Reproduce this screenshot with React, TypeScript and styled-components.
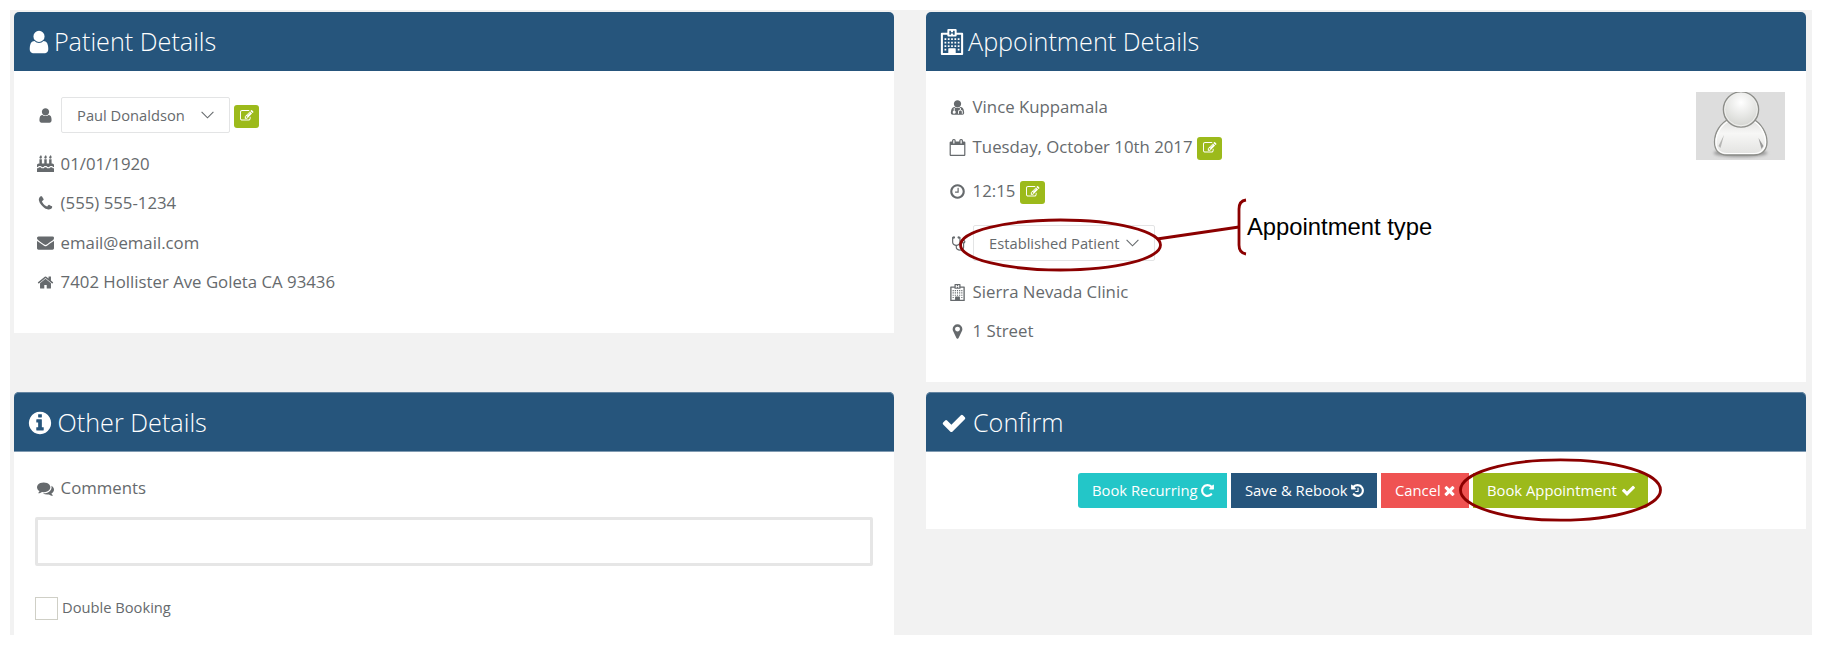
import React from 'react';
import styled, { createGlobalStyle } from 'styled-components';

const GlobalStyle = createGlobalStyle`
  * { box-sizing: border-box; }
  body {
    margin: 0;
    background: #fff;
    color: #666a6d;
    font: 16.8px/24px "Open Sans", sans-serif;
  }
`;

const ring =
  'M1664 896q0 209-103 385.5t-279.5 279.5-385.5 103-385.5-103-279.5-279.5-103-385.5 103-385.5 279.5-279.5 385.5-103 385.5 103 279.5 279.5 103 385.5z';
const flame =
  'q0 77-36 118.5t-92 41.5q-53 0-90.5-37.5t-37.5-90.5q0-29 9.5-51t23.5-34 31-28 31-31.5 23.5-44.5 9.5-67q38 0 83 74t45 150z';
const windowRow = (y: number, xs: number[]) => xs.map((x) => `M${x} ${y}h120v120h-120z`).join('');

const paths = {
  user: 'M1536 1399q0 109-62.5 187t-150.5 78h-854q-88 0-150.5-78t-62.5-187q0-85 8.5-160.5t31.5-152 58.5-131 94-89 134.5-34.5q131 128 313 128t313-128q76 0 134.5 34.5t94 89 58.5 131 31.5 152 8.5 160.5zm-256-887q0 159-112.5 271.5t-271.5 112.5-271.5-112.5-112.5-271.5 112.5-271.5 271.5-112.5 271.5 112.5 112.5 271.5z',
  cake:
    'M1792 1408v384h-1792v-384q45 0 85-14t59-27.5 47-37.5q30-27 51.5-38t56.5-11q24 0 44 7t31 15 33 27q29 25 47 38t58 27 86 14q45 0 85-14.5t58-27 48-37.5q21-19 32.5-27t31-15 43.5-7q35 0 56.5 11t51.5 38q28 24 47 37.5t59 27.5 85 14 85-14 59-27.5 47-37.5q30-27 51.5-38t56.5-11q34 0 55.5 11t51.5 38q28 24 47 37.5t59 27.5 85 14z' +
    'M1792 1088v192q-24 0-44-7t-31-15-33-27q-29-25-47-38t-58-27-85-14q-46 0-86 14t-58 27-47 38q-22 19-33 27t-31 15-44 7q-35 0-56.5-11t-51.5-38q-29-25-47-38t-58-27-86-14q-45 0-85 14.5t-58 27-48 37.5q-21 19-32.5 27t-31 15-43.5 7q-35 0-56.5-11t-51.5-38q-28-24-47-37.5t-59-27.5-85-14q-46 0-86 14t-58 27-47 38q-22 19-33 27t-31 15-44 7v-192q0-80 56-136t136-56h64v-448h256v448h256v-448h256v448h256v-448h256v448h64q80 0 136 56t56 136z' +
    `M512 224${flame}M1024 224${flame}M1536 224${flame}`,
  phone:
    'M1600 1240q0 27-10 70.5t-21 68.5q-21 50-122 106-94 51-186 51-27 0-52.5-3.5t-57.5-12.5-47.5-14.5-55.5-20.5-49-18q-98-35-175-83-128-79-264.5-215.5t-215.5-264.5q-48-77-83-175-3-9-18-49t-20.5-55.5-14.5-47.5-12.5-57.5-3.5-52.5q0-92 51-186 56-101 106-122 25-11 68.5-21t70.5-10q14 0 21 3 18 6 53 76 11 19 30 54t35 63.5 31 53.5q3 4 17.5 25t21.5 35.5 7 28.5q0 20-28.5 50t-62 55-62 53-28.5 46q0 9 5 22.5t8.5 20.5 14 24 11.5 19q76 137 174 235t235 174q2 1 19 11.5t24 14 20.5 8.5 22.5 5q18 0 46-28.5t53-62 55-62 50-28.5q14 0 28.5 7t35.5 21.5 25 17.5q25 15 53.5 31t63.5 35 54 30q70 35 76 53 3 7 3 21z',
  envelope:
    'M1792 710v794q0 66-47 113t-113 47h-1472q-66 0-113-47t-47-113v-794q44 49 101 87 362 246 497 345 57 42 92.5 65.5t94.5 48 110 24.5h2q51 0 110-24.5t94.5-48 92.5-65.5q170-123 498-345 57-39 100-87zm0-294q0 79-49 151t-122 123q-376 261-468 325-10 7-42.5 31t-54 38.5-52 32.5-57.5 27-50 9h-2q-23 0-50-9t-57.5-27-52-32.5-54-38.5-42.5-31q-91-64-262-182.5t-205-142.5q-62-42-117-115.5t-55-136.5q0-78 41.5-130t118.5-52h1472q65 0 112.5 47t47.5 113z',
  home: 'M1472 992v480q0 26-19 45t-45 19h-384v-384h-256v384h-384q-26 0-45-19t-19-45v-480q0-1 .5-3t.5-3l575-474 575 474q1 2 1 6zm223-69l-62 74q-8 9-21 11h-3q-13 0-21-7l-692-577-692 577q-12 8-24 7-13-2-21-11l-62-74q-8-10-7-23.5t11-21.5l719-599q32-26 76-26t76 26l244 204v-195q0-14 9-23t23-9h192q14 0 23 9t9 23v408l219 182q10 8 11 21.5t-7 23.5z',
  calendar:
    'M192 1664h1408v-1024h-1408v1024zm384-1216v-288q0-14-9-23t-23-9h-64q-14 0-23 9t-9 23v288q0 14 9 23t23 9h64q14 0 23-9t9-23zm768 0v-288q0-14-9-23t-23-9h-64q-14 0-23 9t-9 23v288q0 14 9 23t23 9h64q14 0 23-9t9-23zm384-64v1280q0 52-38 90t-90 38h-1408q-52 0-90-38t-38-90v-1280q0-52 38-90t90-38h128v-96q0-66 47-113t113-47h64q66 0 113 47t47 113v96h384v-96q0-66 47-113t113-47h64q66 0 113 47t47 113v96h128q52 0 90 38t38 90z',
  clock:
    'M1024 544v448q0 14-9 23t-23 9h-320q-14 0-23-9t-9-23v-64q0-14 9-23t23-9h224v-352q0-14 9-23t23-9h64q14 0 23 9t9 23zM1440 896q0-148-73-273t-198-198-273-73-273 73-198 198-73 273 73 273 198 198 273 73 273-73 198-198 73-273z' +
    ring,
  marker:
    'M1152 640q0-106-75-181t-181-75-181 75-75 181 75 181 181 75 181-75 75-181zm256 0q0 109-33 179l-364 774q-16 33-47.5 52t-67.5 19-67.5-19-46.5-52l-365-774q-33-70-33-179 0-212 150-362t362-150 362 150 150 362z',
  info:
    'M1152 1376v-160q0-14-9-23t-23-9h-96v-512q0-14-9-23t-23-9h-320q-14 0-23 9t-9 23v160q0 14 9 23t23 9h96v320h-96q-14 0-23 9t-9 23v160q0 14 9 23t23 9h448q14 0 23-9t9-23zm-128-896v-160q0-14-9-23t-23-9h-192q-14 0-23 9t-9 23v160q0 14 9 23t23 9h192q14 0 23-9t9-23z' +
    ring,
  check:
    'M1671 566q0 40-28 68l-724 724-136 136q-28 28-68 28t-68-28l-136-136-362-362q-28-28-28-68t28-68l136-136q28-28 68-28t68 28l294 295 656-657q28-28 68-28t68 28l136 136q28 28 28 68z',
  times:
    'M1490 1322q0 40-28 68l-136 136q-28 28-68 28t-68-28l-294-294-294 294q-28 28-68 28t-68-28l-136-136q-28-28-28-68t28-68l294-294-294-294q-28-28-28-68t28-68l136-136q28-28 68-28t68 28l294 294 294-294q28-28 68-28t68 28l136 136q28 28 28 68t-28 68l-294 294 294 294q28 28 28 68z',
  repeat:
    'M1664 256v448q0 26-19 45t-45 19h-448q-42 0-59-40-17-39 14-69l138-138q-148-137-349-137-104 0-198.5 40.5t-163.5 109.5-109.5 163.5-40.5 198.5 40.5 198.5 109.5 163.5 163.5 109.5 198.5 40.5q119 0 225-52t179-147q7-10 23-12 15 0 25 9l137 138q9 8 9.5 20.5t-7.5 22.5q-109 132-264 204.5t-327 72.5q-156 0-298-61t-245-164-164-245-61-298 61-298 164-245 245-164 298-61q147 0 284.5 55.5t244.5 156.5l130-129q29-31 70-14 39 17 39 59z',
  history:
    'M1664 896q0 156-61 298t-164 245-245 164-298 61q-172 0-327-72.5t-264-204.5q-7-10-6.5-22.5t8.5-20.5l137-138q10-9 25-9 16 2 23 12 73 95 179 147t225 52q104 0 198.5-40.5t163.5-109.5 109.5-163.5 40.5-198.5-40.5-198.5-109.5-163.5-163.5-109.5-198.5-40.5q-98 0-188 35.5t-160 101.5l137 138q31 30 14 69-17 40-59 40h-448q-26 0-45-19t-19-45v-448q0-42 40-59 39-17 69 14l130 129q107-101 244.5-156.5t284.5-55.5q156 0 298 61t245 164 164 245 61 298zm-640-288v448q0 14-9 23t-23 9h-320q-14 0-23-9t-9-23v-64q0-14 9-23t23-9h224v-352q0-14 9-23t23-9h64q14 0 23 9t9 23z',
  comments:
    'M1408 768q0 139-94 257t-256.5 186.5-353.5 68.5q-86 0-176-16-124 88-278 128-36 9-86 16h-3q-11 0-20.5-8t-11.5-21q-1-3-1-6.5t.5-6.5 2-6l2.5-5 3.5-5.5 4-5 4.5-5 4-4.5q5-6 23-25t26-29.5 22.5-29 25-38.5 20.5-44q-124-72-195-177t-71-224q0-139 94-257t256.5-186.5 353.5-68.5 353.5 68.5 256.5 186.5 94 257zm384 256q0 120-71 224.5t-195 176.5q10 24 20.5 44t25 38.5 22.5 29 26 29.5 23 25q1 1 4 4.5t4.5 5 4 5 3.5 5.5l2.5 5 2 6 .5 6.5-1 6.5q-3 14-13 22t-22 7q-50-7-86-16-154-40-278-128-90 16-176 16-271 0-472-132 58 4 88 4 161 0 309-45t264-129q125-92 192-212t67-254q0-77-23-152 129 71 204 178t75 230z',
  edit: 'M888 1184l116-116-152-152-116 116v56h96v96h56zm440-720q-16-16-33 1l-350 350q-17 17-1 33t33-1l350-350q17-17 1-33zm80 594v190q0 119-84.5 203.5t-203.5 84.5h-832q-119 0-203.5-84.5t-84.5-203.5v-832q0-119 84.5-203.5t203.5-84.5h832q63 0 117 25 15 7 18 23 3 17-9 29l-49 49q-14 14-32 8-23-6-45-6h-832q-66 0-113 47t-47 113v832q0 66 47 113t113 47h832q66 0 113-47t47-113v-126q0-13 9-22l64-64q15-15 35-7t20 29zm-96-738l288 288-672 672h-288v-288zm444 132l-92 92-288-288 92-92q28-28 68-28t68 28l152 152q28 28 28 68t-28 68z',
  stethoscope:
    'M1600 704q0-26-19-45t-45-19-45 19-19 45 19 45 45 19 45-19 19-45zm128 0q0 62-35.5 111t-92.5 70v395q0 159-131.5 271.5t-316.5 112.5-316.5-112.5-131.5-271.5v-132q-164-20-274-128t-110-252v-512q0-26 19-45t45-19q6 0 16 2 17-30 47-48t65-18q53 0 90.5 37.5t37.5 90.5-37.5 90.5-90.5 37.5q-33 0-64-18v402q0 106 94 181t226 75 226-75 94-181v-402q-31 18-64 18-53 0-90.5-37.5t-37.5-90.5 37.5-90.5 90.5-37.5q35 0 65 18t47 48q10-2 16-2 26 0 45 19t19 45v512q0 144-110 252t-274 128v132q0 106 94 181t226 75 226-75 94-181v-395q-57-21-92.5-70t-35.5-111q0-80 56-136t136-56 136 56 56 136z',
  // The sign on the roof is solid, with the letter cut out of it.
  hospital:
    'M128 320q0-64 64-64h384v-192q0-64 64-64h512q64 0 64 64v192h384q64 0 64 64v1408q0 64-64 64h-1408q-64 0-64-64z' +
    'M270 398v1252h370v-290q0-32 32-32h448q32 0 32 32v290h370v-1252h-306v50q0 64-64 64h-512q-64 0-64-64v-50z' +
    'M712 112h112v112h144v-112h112v288h-112v-88h-144v88h-112z' +
    windowRow(640, [380, 608, 836, 1064, 1292]) +
    windowRow(880, [380, 608, 836, 1064, 1292]) +
    windowRow(1120, [380, 608, 836, 1064, 1292]) +
    windowRow(1360, [380, 1292]),
  doctor:
    'M1280 512q0 159-112.5 271.5t-271.5 112.5-271.5-112.5-112.5-271.5 112.5-271.5 271.5-112.5 271.5 112.5 112.5 271.5z' +
    'M583 832q131 128 313 128t313-128q150 0 237 110t114 250 40 280q0 192-190 192h-1028q-190 0-190-192 13-140 40-280t114-250 237-110z' +
    'M500 950h100v290q110 40 110 160t-160 150-160-150 110-160z' +
    'M1150 950h100v170q200 20 200 220v210h-100v-200q0-130-150-130t-150 130v200h-100v-210q0-200 200-220z',
};

type IconName = keyof typeof paths;

const Glyph = styled.svg<{ $size: number }>`
  display: block;
  flex: none;
  width: ${(p) => p.$size}px;
  height: ${(p) => p.$size}px;
  fill: currentColor;
  fill-rule: evenodd;
  overflow: visible;
`;

const Icon = ({ name, size }: { name: IconName; size: number }) => (
  <Glyph $size={size} viewBox="0 0 1792 1792" aria-hidden>
    <path d={paths[name]} />
  </Glyph>
);

const Screen = styled.div`
  position: relative;
  width: 1828px;
  height: 657px;
  padding: 10px 16px 22px 10px;
  overflow: hidden;
`;

const Board = styled.main`
  display: grid;
  grid-template-columns: 880px 880px;
  grid-template-rows: 380px auto;
  column-gap: 32px;
  align-items: start;
  height: 625px;
  padding: 2px 6px 0 4px;
  background: #f2f2f2;
  overflow: hidden;
`;

const Panel = styled.section<{ $height: number }>`
  height: ${(p) => p.$height}px;
  background: #fff;
  border-radius: 5px 5px 0 0;
`;

const PanelHeader = styled.header<{ $gap: number; $indent: number; $edged?: boolean }>`
  display: flex;
  align-items: center;
  gap: ${(p) => p.$gap}px;
  height: ${(p) => (p.$edged ? 60 : 59)}px;
  padding-left: ${(p) => p.$indent}px;
  padding-top: ${(p) => (p.$edged ? 1 : 0)}px;
  border-radius: 5px 5px 0 0;
  background: #26557c;
  box-shadow: ${(p) => (p.$edged ? 'inset 0 1px #6384a1, inset 0 -1px #7f9ab1' : 'none')};
  color: #fff;
`;

const Title = styled.h2`
  margin: 0 0 1px;
  font-size: 25.2px;
  font-weight: 300;
  line-height: 36px;
`;

const Fields = styled.div`
  display: flex;
  flex-direction: column;
  padding: 16px 21px 0;
`;

const Field = styled.div<{ $height: number }>`
  display: flex;
  align-items: center;
  height: ${(p) => p.$height}px;
`;

const IconSlot = styled.span`
  display: flex;
  justify-content: center;
  width: 21px;
  margin-right: 4.6px;
`;

const Select = styled.div<{ $width: number }>`
  display: flex;
  align-items: center;
  justify-content: space-between;
  width: ${(p) => p.$width}px;
  height: 36px;
  padding: 0 15px 0 15.5px;
  border: 1px solid #e3e4e5;
  border-radius: 2px;
  font-size: 14.7px;
`;

const Chevron = () => (
  <svg width="13" height="8" viewBox="0 0 13 8" fill="none" stroke="currentColor" strokeWidth="1.1" aria-hidden>
    <path d="M.6 .8l5.9 6 5.9-6" />
  </svg>
);

const EditButton = styled.button`
  display: flex;
  align-items: center;
  justify-content: center;
  width: 25px;
  height: 23px;
  margin: 3px 0 0 4.6px;
  padding: 0 0 1px;
  border: 0;
  border-radius: 3px;
  background: #9cba1b;
  color: #fff;
`;

const Details = styled.div`
  display: flex;
  justify-content: space-between;
  padding-right: 21px;
`;

const Photo = styled.svg`
  display: block;
  width: 89px;
  height: 68px;
  margin-top: 21px;
  background: #ddd;
`;

const CommentInput = styled.input`
  display: block;
  width: 838px;
  height: 49px;
  margin-top: 14px;
  border: 3px solid #e6e6e6;
  border-radius: 2px;
  outline: 0;
`;

const OtherBody = styled.div`
  padding: 21px 21px 0;
`;

const CommentLabel = styled.div`
  display: flex;
  align-items: center;
  height: 30px;
`;

const CheckLabel = styled.label`
  display: flex;
  align-items: flex-start;
  gap: 4px;
  margin-top: 31px;
  font-size: 14.7px;
  line-height: 20px;
`;

const Box = styled.span`
  width: 23px;
  height: 23px;
  border: 1px solid #cfcfc6;
`;

const Actions = styled.div`
  display: flex;
  gap: 4px;
  padding: 21px 0 0 152px;
`;

const Action = styled.button<{ $color: string; $width: number; $radius?: string }>`
  display: flex;
  align-items: center;
  justify-content: space-between;
  width: ${(p) => p.$width}px;
  height: 35px;
  padding: 0 12.5px 1px 14px;
  border: 0;
  border-radius: ${(p) => p.$radius ?? '0'};
  background: ${(p) => p.$color};
  color: #fff;
  font: 14.8px/20px "Open Sans", sans-serif;
  white-space: nowrap;
`;

const Markup = styled.svg`
  position: absolute;
  inset: 0;
  width: 1828px;
  height: 657px;
  pointer-events: none;
  fill: none;
  stroke: #8b0000;
  stroke-width: 2.8;
`;

const Callout = styled.div`
  position: absolute;
  left: 1247px;
  top: 213px;
  color: #000;
  font: 23.8px/28px "Liberation Sans", Arial, sans-serif;
  white-space: nowrap;
`;

const Row = ({ icon, height, size = 17, children }: { icon: IconName; height: number; size?: number; children: React.ReactNode }) => (
  <Field $height={height}>
    <IconSlot>
      <Icon name={icon} size={size} />
    </IconSlot>
    {children}
  </Field>
);

const Edit = () => (
  <EditButton aria-label="Edit">
    <Icon name="edit" size={13.5} />
  </EditButton>
);

const Avatar = () => (
  <Photo viewBox="0 0 89 68" role="img" aria-label="Provider photo">
    <defs>
      <radialGradient id="head" cx=".5" cy=".3" r=".7">
        <stop offset="0" stopColor="#fff" />
        <stop offset="1" stopColor="#d3d4d0" />
      </radialGradient>
      <linearGradient id="body" x1="0" y1="0" x2="0" y2="1">
        <stop offset="0" stopColor="#e0e0de" />
        <stop offset=".4" stopColor="#f7f7f6" />
        <stop offset="1" stopColor="#e2e2e0" />
      </linearGradient>
      <filter id="soft" x="-20%" y="-60%" width="140%" height="220%">
        <feGaussianBlur stdDeviation="1.8" />
      </filter>
    </defs>
    <ellipse cx="44.5" cy="61" rx="27" ry="4" fill="#999" filter="url(#soft)" />
    <path d="M33 27C24 31 18.5 41 18.5 50C18.5 58 23 63 31 63H58C66 63 71 58 71 50C71 41 65 31 57 27Z" fill="url(#body)" stroke="#8d8e8a" strokeWidth="1.3" />
    <path d="M33 29C25 33 20 42 20 50C20 57 24 61.5 31 61.5H58C65 61.5 69.5 57 69.5 50C69.5 42 65 33 57 29" fill="none" stroke="#fff" strokeWidth="1.2" />
    <path d="M28 43L22.5 54L24.5 56Z" fill="#b5b5b3" />
    <path d="M62.5 46L67.5 54L65.5 57Z" fill="#999" />
    <circle cx="45" cy="17.5" r="17.6" fill="url(#head)" stroke="#8d8e8a" strokeWidth="1.4" />
    <circle cx="45" cy="17.5" r="16.3" fill="none" stroke="#f0f0ee" strokeWidth="1" />
  </Photo>
);

export default function App() {
  return (
    <>
      <GlobalStyle />
      <Screen>
        <Board>
          <Panel $height={321}>
            <PanelHeader $gap={2.3} $indent={11.6}>
              <Icon name="user" size={26} />
              <Title>Patient Details</Title>
            </PanelHeader>
            <Fields>
              <Row icon="user" height={56}>
                <Select $width={169}>
                  Paul Donaldson
                  <Chevron />
                </Select>
                <Edit />
              </Row>
              <Row icon="cake" height={41}>01/01/1920</Row>
              <Row icon="phone" height={38}>(555) 555-1234</Row>
              <Row icon="envelope" height={41}>email@email.com</Row>
              <Row icon="home" height={38}>7402 Hollister Ave Goleta CA 93436</Row>
            </Fields>
          </Panel>

          <Panel $height={370}>
            <PanelHeader $gap={3} $indent={13}>
              <Icon name="hospital" size={26} />
              <Title>Appointment Details</Title>
            </PanelHeader>
            <Details>
              <Fields>
                <Row icon="doctor" height={40}>Vince Kuppamala</Row>
                <Row icon="calendar" height={40}>
                  Tuesday, October 10th 2017
                  <Edit />
                </Row>
                <Row icon="clock" height={48}>
                  12:15
                  <Edit />
                </Row>
                <Row icon="stethoscope" height={56}>
                  <Select $width={182}>
                    Established Patient
                    <Chevron />
                  </Select>
                </Row>
                <Row icon="hospital" height={42}>Sierra Nevada Clinic</Row>
                <Row icon="marker" height={36}>1 Street</Row>
              </Fields>
              <Avatar />
            </Details>
          </Panel>

          <Panel $height={300}>
            <PanelHeader $gap={4.2} $indent={13.4} $edged>
              <Icon name="info" size={26} />
              <Title>Other Details</Title>
            </PanelHeader>
            <OtherBody>
              <CommentLabel>
                <IconSlot>
                  <Icon name="comments" size={17} />
                </IconSlot>
                Comments
              </CommentLabel>
              <CommentInput aria-label="Comments" />
              <CheckLabel>
                <Box />
                Double Booking
              </CheckLabel>
            </OtherBody>
          </Panel>

          <Panel $height={137}>
            <PanelHeader $gap={5.8} $indent={15.2} $edged>
              <Icon name="check" size={26} />
              <Title>Confirm</Title>
            </PanelHeader>
            <Actions>
              <Action $color="#23c6c8" $width={149} $radius="3px 0 0 3px">
                Book Recurring
                <Icon name="repeat" size={15} />
              </Action>
              <Action $color="#26557c" $width={146}>
                Save &amp; Rebook
                <Icon name="history" size={15} />
              </Action>
              <Action $color="#ef5352" $width={88}>
                Cancel
                <Icon name="times" size={15} />
              </Action>
              <Action $color="#9cba1b" $width={175} $radius="0 3px 3px 0">
                Book Appointment
                <Icon name="check" size={15} />
              </Action>
            </Actions>
          </Panel>
        </Board>

        <Markup viewBox="0 0 1828 657" aria-hidden>
          <ellipse cx="1060.5" cy="245" rx="100" ry="25" />
          <path d="M1157 239L1239 227" />
          <path d="M1246 200Q1239 201 1239 209V245Q1239 253 1246 254" />
          <ellipse cx="1560.5" cy="490" rx="100" ry="30.2" />
        </Markup>
        <Callout>Appointment type</Callout>
      </Screen>
    </>
  );
}
